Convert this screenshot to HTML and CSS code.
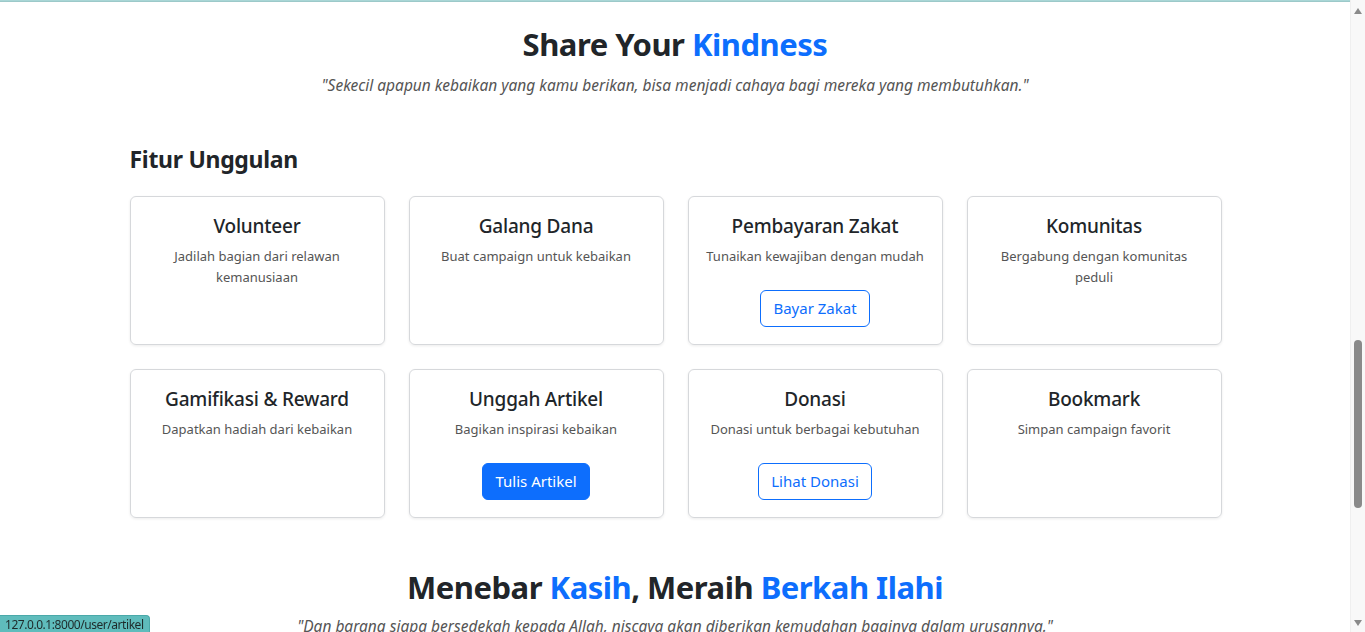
FILE: index.html
```html
<!DOCTYPE html>
<html lang="id">
<head>
<meta charset="utf-8">
<title>Share Your Kindness</title>
<link rel="stylesheet" href="styles.css">
</head>
<body>
<div class="viewport">
  <div class="page">
    <div class="topline"></div>
    <section class="hero">
      <h2 class="hero-title">Share Your <span class="blue">Kindness</span></h2>
      <p class="hero-quote">"Sekecil apapun kebaikan yang kamu berikan, bisa menjadi cahaya bagi mereka yang membutuhkan."</p>
    </section>
    <section class="features">
      <h3 class="features-title">Fitur Unggulan</h3>
      <div class="grid">
        <div class="card"><h5>Volunteer</h5><p>Jadilah bagian dari relawan kemanusiaan</p></div>
        <div class="card"><h5>Galang Dana</h5><p>Buat campaign untuk kebaikan</p></div>
        <div class="card"><h5>Pembayaran Zakat</h5><p>Tunaikan kewajiban dengan mudah</p><a class="btn btn-outline" href="#">Bayar Zakat</a></div>
        <div class="card"><h5>Komunitas</h5><p>Bergabung dengan komunitas peduli</p></div>
        <div class="card"><h5>Gamifikasi &amp; Reward</h5><p>Dapatkan hadiah dari kebaikan</p></div>
        <div class="card"><h5>Unggah Artikel</h5><p>Bagikan inspirasi kebaikan</p><a class="btn btn-primary" href="#">Tulis Artikel</a></div>
        <div class="card"><h5>Donasi</h5><p>Donasi untuk berbagai kebutuhan</p><a class="btn btn-outline" href="#">Lihat Donasi</a></div>
        <div class="card"><h5>Bookmark</h5><p>Simpan campaign favorit</p></div>
      </div>
    </section>
    <section class="hero second">
      <h2 class="hero-title">Menebar <span class="blue">Kasih</span>, Meraih <span class="blue">Berkah Ilahi</span></h2>
      <p class="hero-quote">"Dan barang siapa bersedekah kepada Allah, niscaya akan diberikan kemudahan baginya dalam urusannya."</p>
    </section>
  </div>
  <div class="scrollbar">
    <span class="arrow up"></span>
    <div class="track"><div class="thumb"></div></div>
    <span class="arrow down"></span>
  </div>
</div>
<div class="status">127.0.0.1:8000/user/artikel</div>
</body>
</html>
```

FILE: styles.css
```css
* { box-sizing: border-box; }
html, body { margin: 0; padding: 0; height: 100%; overflow: hidden; }
body {
  font-family: "Noto Sans", "Open Sans", sans-serif;
  color: #212529;
  background: #fff;
}
.viewport { display: flex; height: 632px; }
.page { flex: 1; overflow: hidden; }
.topline { height: 2px; background: #a9d6d6; border-bottom: 1px solid #9cc9c9; }
.hero { text-align: center; padding-top: 23px; }
.hero-title {
  margin: 0;
  font-size: 31px;
  font-weight: 700;
  line-height: 38px;
  letter-spacing: -0.5px;
}
.blue { color: #0d6efd; }
.hero-quote {
  margin: 10px 0 0;
  font-style: italic;
  font-size: 15.5px;
  line-height: 24px;
  color: #555;
}
.features { width: 1092px; margin: 47px auto 0; padding-left: 1px; box-sizing: content-box; }
.features-title { margin: 0 0 22px; font-size: 23px; line-height: 30px; font-weight: 700; letter-spacing: -0.3px; }
.grid { display: grid; grid-template-columns: repeat(4, 1fr); gap: 24px; }
.card {
  border: 1px solid #d6d8db;
  border-radius: 6px;
  box-shadow: 0 1px 3px rgba(0,0,0,0.08);
  padding: 17px 16px 16px;
  text-align: center;
  min-height: 149px;
}
.card h5 { margin: 0 0 8px; font-size: 19px; line-height: 24px; font-weight: 500; letter-spacing: -0.2px; }
.card p { margin: 0; font-size: 13px; line-height: 21px; color: #555; }
.btn {
  display: inline-block;
  margin-top: 23px;
  padding: 6px 12px;
  font-size: 15px;
  line-height: 23px;
  border-radius: 6px;
  text-decoration: none;
  border: 1px solid #0d6efd;
}
.btn-outline { color: #0d6efd; background: #fff; }
.btn-primary { color: #fff; background: #0d6efd; }
.second { padding-top: 50px; }
.second .hero-quote { margin-top: 8px; }
.scrollbar {
  width: 15px;
  background: #f8f8f8;
  border-left: 1px solid #efefef;
  display: flex;
  flex-direction: column;
  align-items: center;
  padding: 8px 0 6px;
}
.arrow { width: 0; height: 0; border-left: 4px solid transparent; border-right: 4px solid transparent; }
.arrow.up { border-bottom: 6px solid #8a8a8a; }
.arrow.down { border-top: 6px solid #8a8a8a; }
.track { flex: 1; width: 100%; display: flex; justify-content: center; padding-top: 326px; }
.thumb { width: 8px; height: 168px; background: #8a8a8a; border-radius: 4px; }
.status {
  position: fixed;
  left: 0;
  bottom: 0;
  padding: 1px 5px 0 5px;
  height: 17px;
  font-size: 12px;
  line-height: 16px;
  color: #1e2a2a;
  background: #5fbcbc;
  border: 1px solid #4aa9a9;
  border-left: 0;
  border-bottom: 0;
  border-top-right-radius: 4px;
  font-family: "Noto Sans", sans-serif;
  letter-spacing: -0.45px;
}
```
